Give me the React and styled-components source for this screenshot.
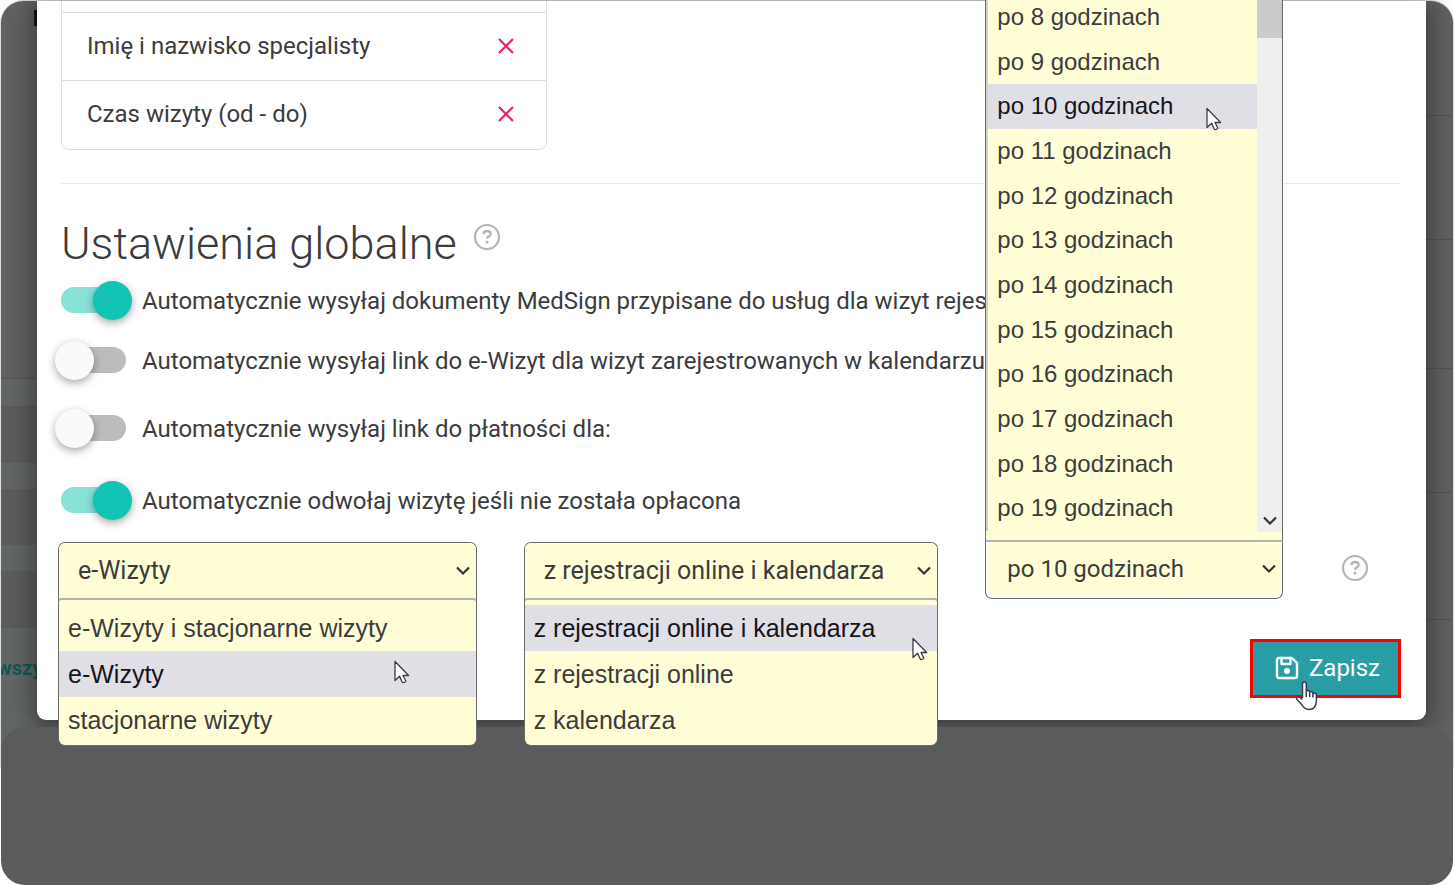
import React from "react";
import styled, { createGlobalStyle } from "styled-components";

const listFields = ["Imię i nazwisko specjalisty", "Czas wizyty (od - do)"];

const toggles = [
  {
    id: "medsign",
    on: true,
    height: 56,
    text: "Automatycznie wysyłaj dokumenty MedSign przypisane do usług dla wizyt rejes",
  },
  {
    id: "evisit",
    on: false,
    height: 64,
    text: "Automatycznie wysyłaj link do e-Wizyt dla wizyt zarejestrowanych w kalendarzu",
  },
  {
    id: "payment",
    on: false,
    height: 72,
    text: "Automatycznie wysyłaj link do płatności dla:",
  },
  {
    id: "cancel",
    on: true,
    height: 72,
    text: "Automatycznie odwołaj wizytę jeśli nie została opłacona",
  },
];

const visitTypes = ["e-Wizyty i stacjonarne wizyty", "e-Wizyty", "stacjonarne wizyty"];
const sources = ["z rejestracji online i kalendarza", "z rejestracji online", "z kalendarza"];
const hours = [8, 9, 10, 11, 12, 13, 14, 15, 16, 17, 18, 19].map((h) => `po ${h} godzinach`);

function Pointer() {
  return (
    <svg width="16" height="24" viewBox="0 0 16 24" aria-hidden="true">
      <path
        d="M1 1.500v19l4.600-4.300 2.900 6.300q1.800.6 3.400-1.300l-2.900-5.700h5.600z"
        fill="#fff"
        stroke="#3c3c44"
        strokeWidth="1.300"
        strokeLinejoin="round"
      />
    </svg>
  );
}

function Hand() {
  return (
    <svg width="24" height="30" viewBox="0 0 24 30" aria-hidden="true">
      <path
        d="M7.500 17V3Q7.500 1 9.300 1t2 2v6.500q3-.5 3.400 1.200 2.700-.6 3.200 1.200 3.500-.2 3.500 2.400V20Q21 28.500 14 28.500q-4.500 0-7-4.500L2 18.500q-1.200-2 .8-2.600 1.800-.2 4.700 2.600"
        fill="#fff"
        stroke="#3a3a4c"
        strokeWidth="1.500"
        strokeLinejoin="round"
      />
      <path d="M11.300 9.500v6.500M14.700 10.700V16M17.900 12v4.500" stroke="#3a3a4c" strokeWidth="1.500" />
    </svg>
  );
}

function Help() {
  return (
    <svg width="28" height="28" viewBox="0 0 28 28" aria-hidden="true">
      <circle cx="14" cy="14" r="12" fill="none" stroke="#b5b5b5" strokeWidth="2.200" />
      <path
        d="M10.400 11.200q.4-3.200 3.700-3.200 3.500 0 3.500 2.900 0 1.600-1.700 2.500-1.800.9-1.800 2.300"
        fill="none"
        stroke="#b5b5b5"
        strokeWidth="2.400"
      />
      <circle cx="14" cy="19" r="1.500" fill="#b5b5b5" />
    </svg>
  );
}

function Chevron() {
  return (
    <svg width="14" height="10" viewBox="0 0 14 10" aria-hidden="true">
      <path d="M1 1.500l6 6 6-6" fill="none" stroke="#333" strokeWidth="2.200" />
    </svg>
  );
}

function Menu({ items, active }) {
  return items.map((item) => (
    <Option key={item} role="option" aria-selected={item === active} $active={item === active}>
      {item}
    </Option>
  ));
}

function Picker({ label, items, value, inset }) {
  return (
    <SelectBox $inset={inset}>
      <Select aria-label={label} defaultValue={value} $small={inset}>
        {items.map((item) => (
          <option key={item}>{item}</option>
        ))}
      </Select>
      <Chevron />
    </SelectBox>
  );
}

function App() {
  return (
    <Page>
      <GlobalStyle />
      <Stage>
        <Side>
          <SideRow $size={378} $line>
            <Mark />
          </SideRow>
          <SideRow $size={27} $tone="#626664" />
          <SideRow $size={57} $tone="#5c5c5c" />
          <SideRow $size={26} $tone="#626664" />
          <SideRow $size={56} $tone="#5c5c5c" />
          <SideRow $size={26} $tone="#626664" />
          <SideRow $size={57} $tone="#5c5c5c" />
          <SideRow $size={80} $tone="#626664">
            <PageLink href="#">wszy</PageLink>
          </SideRow>
          <SideRow $size={20} $tone="#626664" />
        </Side>
        <Modal>
          <FieldList>
            <FieldSpacer />
            {listFields.map((field) => (
              <Field key={field}>
                {field}
                <Remove aria-label={`Usuń ${field}`}>
                  <svg width="16" height="16" viewBox="0 0 16 16">
                    <path d="M1 1l14 14M15 1L1 15" stroke="#ee1d67" strokeWidth="2.200" />
                  </svg>
                </Remove>
              </Field>
            ))}
          </FieldList>
          <Divider />
          <TitleRow>
            <Title>Ustawienia globalne</Title>
            <Help />
          </TitleRow>
          {toggles.map((toggle) => (
            <ToggleRow key={toggle.id} htmlFor={toggle.id} $height={toggle.height}>
              <Switch id={toggle.id} type="checkbox" defaultChecked={toggle.on} />
              <ToggleText>{toggle.text}</ToggleText>
            </ToggleRow>
          ))}
          <Pickers>
            <Dropdown>
              <Picker label="Rodzaj wizyty" items={visitTypes} value="e-Wizyty" />
              <MenuBelow role="listbox" aria-label="Rodzaj wizyty">
                <Menu items={visitTypes} active="e-Wizyty" />
                <Cursor $right={66} $top={60}>
                  <Pointer />
                </Cursor>
              </MenuBelow>
            </Dropdown>
            <Dropdown>
              <Picker label="Źródło wizyty" items={sources} value={sources[0]} />
              <MenuBelow role="listbox" aria-label="Źródło wizyty">
                <Menu items={sources} active={sources[0]} />
                <Cursor $right={9} $top={37}>
                  <Pointer />
                </Cursor>
              </MenuBelow>
            </Dropdown>
            <HoursDropdown>
              <MenuAbove>
                <HoursList role="listbox" aria-label="Czas na opłacenie">
                  <Menu items={hours} active="po 10 godzinach" />
                </HoursList>
                <Scrollbar>
                  <Thumb />
                  <Chevron />
                </Scrollbar>
                <Cursor $right={60} $top={112}>
                  <Pointer />
                </Cursor>
              </MenuAbove>
              <Picker inset label="Czas na opłacenie" items={hours} value="po 10 godzinach" />
            </HoursDropdown>
            <HelpCell>
              <Help />
            </HelpCell>
          </Pickers>
          <Actions>
            <Save type="submit">
              <svg width="24" height="24" viewBox="0 0 24 24" aria-hidden="true">
                <path
                  d="M4 2h13l5 5v13q0 2-2 2H4q-2 0-2-2V4q0-2 2-2z M6.500 2v6h9V2"
                  fill="none"
                  stroke="#fff"
                  strokeWidth="2.400"
                  strokeLinejoin="round"
                />
                <circle cx="12" cy="15" r="3" fill="#fff" />
              </svg>
              Zapisz
              <HandCursor>
                <Hand />
              </HandCursor>
            </Save>
          </Actions>
        </Modal>
        <Side $right>
          <SideRow $size={115} $line />
          <SideRow $size={124} $line />
          <SideRow $size={129} $line />
          <SideRow $size={124} $line />
          <SideRow $size={127} $line />
        </Side>
      </Stage>
      <Footer />
    </Page>
  );
}

export default App;

const GlobalStyle = createGlobalStyle`
  * {
    box-sizing: border-box;
  }
  body {
    margin: 0;
    background: #fff;
    color: #3c3c3c;
    font-family: Roboto, "Liberation Sans", sans-serif;
    font-size: 24px;
  }
`;

const Page = styled.div`
  display: flex;
  flex-direction: column;
  min-height: 100vh;
  padding: 1px;
  overflow: hidden;
`;

const Stage = styled.div`
  display: flex;
  align-items: stretch;
  padding-bottom: 7px;
  margin-bottom: -40px;
  border-radius: 22px 22px 0 0;
  background: #616161;
  box-shadow: 0 0 0 1px #dedede;
`;

const Side = styled.div`
  display: flex;
  flex-direction: column;
  flex: 0 0 ${(p) => (p.$right ? 27 : 36)}px;
  overflow: hidden;
  border-radius: ${(p) => (p.$right ? "0 22px 0 0" : "22px 0 0 0")};
`;

const SideRow = styled.div`
  display: flex;
  flex: 0 0 ${(p) => p.$size}px;
  align-items: center;
  background: ${(p) => p.$tone || "transparent"};
  border-bottom: ${(p) => (p.$line ? "1px solid #525252" : "none")};

  &:last-child {
    flex-grow: ${(p) => (p.$tone ? 1 : 0)};
  }
`;

const Mark = styled.span`
  align-self: flex-start;
  width: 3px;
  height: 16px;
  margin: 9px 0 0 auto;
  background: #1c1512;
`;

const PageLink = styled.a`
  color: #0e5a58;
  font-size: 20px;
  font-weight: 700;
  text-decoration: none;
  margin-left: -4px;
`;

const Modal = styled.main`
  position: relative;
  flex: 1;
  min-width: 0;
  padding: 0 25px 22px 24px;
  margin-bottom: 40px;
  background: #fff;
  border-radius: 0 0 9px 9px;
  box-shadow: 0 4px 26px 4px rgba(0, 0, 0, 0.4);
`;

const FieldList = styled.ul`
  max-width: 486px;
  margin: 0;
  padding: 0 0 1px;
  list-style: none;
  border: 1px solid #dfdfdf;
  border-top: none;
  border-radius: 0 0 8px 8px;
`;

const FieldSpacer = styled.li`
  height: 11px;
`;

const Field = styled.li`
  display: flex;
  align-items: center;
  justify-content: space-between;
  height: 68px;
  padding: 0 32px 2px 25px;
  border-top: 1px solid #dfdfdf;
`;

const Remove = styled.button`
  display: flex;
  padding: 0;
  border: none;
  background: none;
`;

const Divider = styled.hr`
  height: 1px;
  margin: 33px 0 0;
  border: none;
  background: #ebebeb;
`;

const TitleRow = styled.div`
  display: flex;
  align-items: center;
  gap: 16px;
  padding-top: 31px;
  height: 88px;

  svg {
    margin-bottom: 14px;
  }
`;

const Title = styled.h1`
  margin: 0;
  font-size: 45px;
  line-height: 56px;
  font-weight: 300;
`;

const ToggleRow = styled.label`
  display: flex;
  align-items: center;
  gap: 16px;
  width: 69%;
  height: ${(p) => p.$height}px;
`;

const Switch = styled.input`
  appearance: none;
  flex: none;
  display: flex;
  align-items: center;
  width: 65px;
  height: 26px;
  margin: 0;
  border-radius: 13px;
  background: #bcbcbc;

  &::before {
    content: "";
    flex: none;
    width: 39px;
    height: 39px;
    margin-left: -6px;
    border-radius: 50%;
    background: #fafafa;
    box-shadow: 0 3px 8px rgba(0, 0, 0, 0.35);
  }

  &:checked {
    background: #88e2d8;
  }

  &:checked::before {
    margin-left: 32px;
    background: #13c3b3;
  }
`;

const ToggleText = styled.span`
  padding-top: 2px;
  white-space: nowrap;
`;

const Pickers = styled.div`
  display: grid;
  grid-template-columns: 419fr 415fr 298fr 71fr;
  column-gap: 47px;
  height: 58px;
  margin: 6px 0 0 -3px;
`;

const Dropdown = styled.div`
  position: relative;
  min-width: 0;
  height: 58px;
  border: 1px solid #6a6a6a;
  border-bottom: none;
  border-radius: 7px 7px 0 0;
  background: #fffed7;
`;

const HoursDropdown = styled(Dropdown)`
  height: 57px;
  border: 1px solid #6a6a6a;
  border-top: none;
  border-radius: 0 0 7px 7px;
  background: #fff;
`;

const SelectBox = styled.div`
  display: flex;
  align-items: center;
  height: ${(p) => (p.$inset ? 53 : 55)}px;
  margin-left: ${(p) => (p.$inset ? 2 : 0)}px;
  padding-right: 6px;
  border-radius: 6px;
  background: #fffed7;

  svg {
    flex: none;
    margin-left: -14px;
    pointer-events: none;
  }
`;

const Select = styled.select`
  appearance: none;
  flex: 1;
  min-width: 0;
  height: 53px;
  padding: 0 19px;
  border: none;
  background: none;
  color: #3c3c3c;
  font-family: inherit;
  font-size: ${(p) => (p.$small ? 24 : 25)}px;
`;

const MenuBelow = styled.div`
  position: absolute;
  z-index: 2;
  top: 55px;
  left: -1px;
  right: -1px;
  padding: 5px 0 2px;
  border: 1px solid #6a6a6a;
  border-top: 2px solid #b3b3ad;
  border-radius: 4px 4px 7px 7px;
  background: #fffed7;
  font-family: "Liberation Sans", Arial, sans-serif;
  font-size: 25px;
  line-height: 46px;
`;

const MenuAbove = styled.div`
  position: absolute;
  z-index: 2;
  bottom: 56px;
  left: -1px;
  right: -1px;
  display: flex;
  padding-bottom: 8px;
  border: 1px solid #6a6a6a;
  border-top: none;
  border-bottom: 2px solid #b3b3ad;
  background: #fffed7;
  font-family: "Liberation Sans", Arial, sans-serif;
  line-height: 44px;
`;

const HoursList = styled.div`
  display: grid;
  grid-auto-rows: 1fr;
  flex: 1;
  height: 536px;
  margin-bottom: 1px;
  border-left: 2px solid #d2d2cc;
`;

const Option = styled.div`
  padding: 0 9px;
  white-space: nowrap;
  background: ${(p) => (p.$active ? "#e0dfe6" : "transparent")};
  color: ${(p) => (p.$active ? "#15141a" : "#3c3c3c")};
`;

const Scrollbar = styled.div`
  display: flex;
  flex-direction: column;
  align-items: center;
  justify-content: space-between;
  width: 25px;
  padding-bottom: 6px;
  background: #efefef;
`;

const Thumb = styled.div`
  width: 25px;
  height: 43px;
  background: #cbcbcb;
`;

const Cursor = styled.span`
  position: absolute;
  top: ${(p) => p.$top}px;
  right: ${(p) => p.$right}px;
  line-height: 0;
`;

const HelpCell = styled.div`
  display: flex;
  align-items: center;
  height: 52px;
  padding-left: 11px;
`;

const Actions = styled.div`
  display: flex;
  justify-content: flex-end;
  margin-top: 39px;
`;

const Save = styled.button`
  position: relative;
  display: flex;
  align-items: center;
  gap: 10px;
  height: 59px;
  padding: 0 18px 2px 22px;
  border: 3px solid #f00;
  background: #289da3;
  color: #fff;
  font: inherit;
`;

const HandCursor = styled.span`
  position: absolute;
  top: 39px;
  left: 42px;
  line-height: 0;
`;

const Footer = styled.footer`
  position: relative;
  flex: 1;
  min-height: 158px;
  border-radius: 24px;
  background: #5a5b5d;
`;
